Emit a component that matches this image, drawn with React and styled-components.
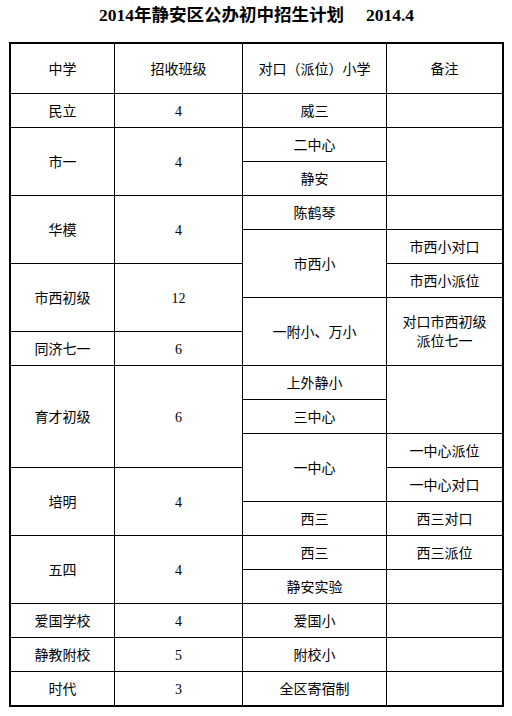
import React from "react";
import styled, { createGlobalStyle } from "styled-components";

const Global = createGlobalStyle`
  html, body { margin: 0; padding: 0; background: #fff; }
  body { font-family: "Liberation Serif", "Noto Sans CJK SC", serif; color: #000; }
`;

const Page = styled.div`
  width: 512px;
  padding: 0 0 0 9px;
  box-sizing: border-box;
`;

const Title = styled.h1`
  margin: 0;
  width: 495px;
  height: 42px;
  box-sizing: border-box;
  padding-top: 5px;
  text-align: center;
  font-family: "Liberation Serif", "Noto Sans CJK SC", serif;
  font-size: 17.5px;
  line-height: 21px;
  font-weight: 700;
  white-space: nowrap;
`;

const Date = styled.span`
  margin-left: 22px;
`;

const Grid = styled.div`
  display: grid;
  grid-template-columns: 103px 127px 143px 115px;
  grid-template-rows: 49px repeat(18, 33px);
  gap: 1px;
  background: #000;
  border: 2px solid #000;
  width: max-content;
`;

const Cell = styled.div`
  grid-row: span ${(p) => p.$rows || 1};
  background: #fff;
  display: flex;
  align-items: center;
  justify-content: center;
  text-align: center;
  font-size: 14px;
  line-height: 19px;
  white-space: pre-line;
  padding-top: 1px;
`;

const header = ["中学", "招收班级", "对口（派位）小学", "备注"];

const cells = [
  ["民立"], ["4"], ["威三"], [""],
  ["市一", 2], ["4", 2], ["二中心"], ["", 2],
  ["静安"],
  ["华模", 2], ["4", 2], ["陈鹤琴"], [""],
  ["市西小", 2], ["市西小对口"],
  ["市西初级", 2], ["12", 2], ["市西小派位"],
  ["一附小、万小", 2], ["对口市西初级\n派位七一", 2],
  ["同济七一"], ["6"],
  ["育才初级", 3], ["6", 3], ["上外静小"], ["", 2],
  ["三中心"],
  ["一中心", 2], ["一中心派位"],
  ["培明", 2], ["4", 2], ["一中心对口"],
  ["西三"], ["西三对口"],
  ["五四", 2], ["4", 2], ["西三"], ["西三派位"],
  ["静安实验"], [""],
  ["爱国学校"], ["4"], ["爱国小"], [""],
  ["静教附校"], ["5"], ["附校小"], [""],
  ["时代"], ["3"], ["全区寄宿制"], [""],
];

export default function App() {
  return (
    <Page>
      <Global />
      <Title>
        2014年静安区公办初中招生计划<Date>2014.4</Date>
      </Title>
      <Grid>
        {header.map((h) => (
          <Cell key={h}>{h}</Cell>
        ))}
        {cells.map(([t, r], i) => (
          <Cell key={i} $rows={r}>
            {t}
          </Cell>
        ))}
      </Grid>
    </Page>
  );
}
